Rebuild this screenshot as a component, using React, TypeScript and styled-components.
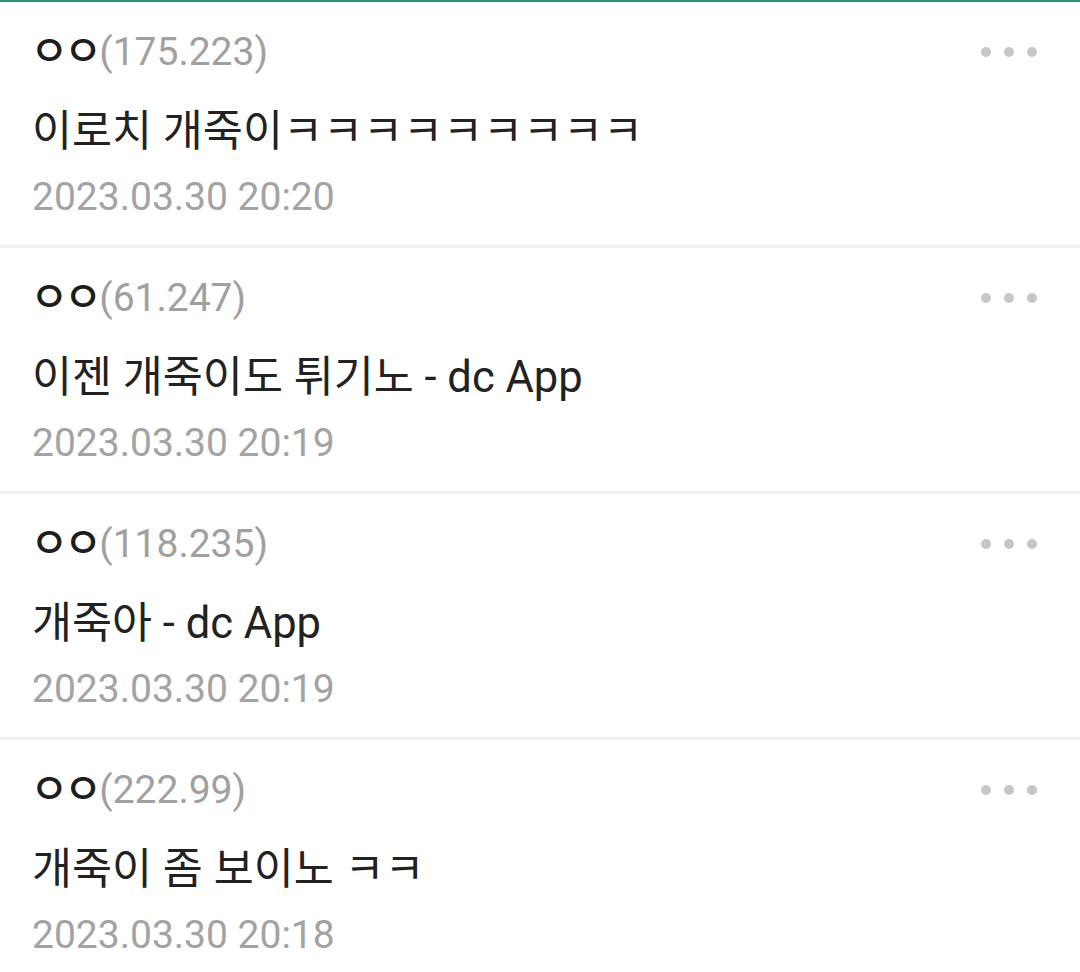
import styled, { createGlobalStyle } from "styled-components";

const GlobalStyle = createGlobalStyle`
  html, body {
    margin: 0;
    padding: 0;
    background: #ffffff;
  }
  body {
    font-family: Roboto, "Noto Sans CJK KR", sans-serif;
  }
`;

const comments = [
  { nick: "ㅇㅇ", ip: "175.223", text: "이로치 개죽이ㅋㅋㅋㅋㅋㅋㅋㅋㅋ", date: "2023.03.30 20:20" },
  { nick: "ㅇㅇ", ip: "61.247", text: "이젠 개죽이도 튀기노 - dc App", date: "2023.03.30 20:19" },
  { nick: "ㅇㅇ", ip: "118.235", text: "개죽아 - dc App", date: "2023.03.30 20:19" },
  { nick: "ㅇㅇ", ip: "222.99", text: "개죽이 좀 보이노 ㅋㅋ", date: "2023.03.30 20:18" },
];

const Page = styled.div`
  width: 1080px;
  min-height: 972px;
  border-top: 2px solid #2f8f6b;
  box-sizing: border-box;
  overflow: hidden;
`;

const List = styled.ul`
  list-style: none;
  margin: 0;
  padding: 0;
`;

const Item = styled.li`
  display: flex;
  flex-direction: column;
  padding: 25px 32px 23px;
  border-bottom: 3px solid #f1f1f1;
`;

const Head = styled.div`
  display: flex;
  align-items: center;
  justify-content: space-between;
  height: 50px;
`;

const Writer = styled.div`
  display: flex;
  align-items: center;
  font-size: 39px;
  line-height: 50px;
`;

const Nick = styled.span`
  color: #1e1e1e;
  font-size: 42px;
  font-weight: 500;
  letter-spacing: -5px;
  margin-left: -2px;
  margin-right: 2px;
`;

const Ip = styled.span`
  color: #a0a0a0;
`;

const MoreButton = styled.button`
  display: flex;
  gap: 13px;
  padding: 0;
  margin-right: 11px;
  border: none;
  background: none;
`;

const Dot = styled.span`
  width: 10px;
  height: 10px;
  border-radius: 50%;
  background: #c6c6c6;
`;

const Text = styled.p`
  margin: 30px 0 0;
  font-size: 43.5px;
  line-height: 50px;
  color: #222222;
`;

const Date = styled.div`
  margin-top: 15px;
  font-size: 39px;
  line-height: 50px;
  color: #a3a3a3;
`;

export default function App() {
  return (
    <Page>
      <GlobalStyle />
      <List>
        {comments.map((c, i) => (
          <Item key={i}>
            <Head>
              <Writer>
                <Nick>{c.nick}</Nick>
                <Ip>({c.ip})</Ip>
              </Writer>
              <MoreButton aria-label="더보기">
                <Dot />
                <Dot />
                <Dot />
              </MoreButton>
            </Head>
            <Text>{c.text}</Text>
            <Date>{c.date}</Date>
          </Item>
        ))}
      </List>
    </Page>
  );
}
